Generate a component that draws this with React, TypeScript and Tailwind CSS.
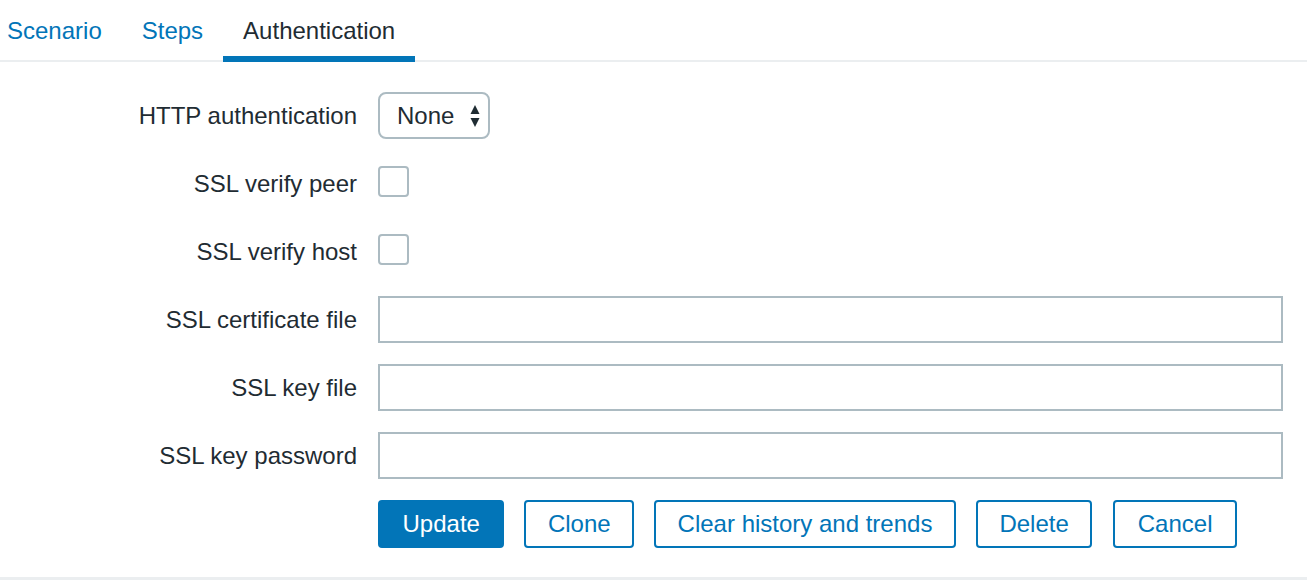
import React from "react";

const tabs = [
  { label: "Scenario", active: false },
  { label: "Steps", active: false },
  { label: "Authentication", active: true },
];

const textFields = ["SSL certificate file", "SSL key file", "SSL key password"];

const buttons = ["Clone", "Clear history and trends", "Delete", "Cancel"];

const SelectArrows = () => (
  <svg width="10" height="22" viewBox="0 0 10 22" className="ml-auto">
    <path d="M5 0 L9.5 9 L0.5 9 Z" fill="#1f2c33" />
    <path d="M0.5 13 L9.5 13 L5 22 Z" fill="#1f2c33" />
  </svg>
);

const Row = ({ label, children }: { label: string; children: React.ReactNode }) => (
  <>
    <div className="flex h-[47px] items-center justify-end pt-[1px] leading-[28px] text-[#1f2c33]">{label}</div>
    <div className="flex h-[47px] items-center">{children}</div>
  </>
);

const Checkbox = () => (
  <div className="-mt-[4px] h-[31px] w-[31px] rounded-[4px] border-2 border-[#acbbc2] bg-white" />
);

export default function App() {
  return (
    <div
      className="flex h-[580px] w-full flex-col overflow-hidden border-b-[3px] border-[#ebeef0] bg-white text-[24px]"
      style={{ fontFamily: '"Liberation Sans", Arial, sans-serif' }}
    >
      {/* tab strip */}
      <ul className="flex border-b-2 border-[#ebeef0]">
        {tabs.map((t, i) => (
          <li
            key={t.label}
            className={`-mb-[2px] h-[62px] border-b-[6px] px-[20px] pt-[17px] leading-[28px] ${
              i === 0 ? "-ml-[13px]" : ""
            } ${t.active ? "border-[#0275b8] text-[#1f2c33]" : "border-transparent text-[#0275b8]"}`}
          >
            {t.label}
          </li>
        ))}
      </ul>

      {/* form */}
      <div className="grid grid-cols-[357px_1fr] gap-x-[21px] gap-y-[21px] pr-[24px] pt-[30px]">
        <Row label="HTTP authentication">
          <div className="flex h-[47px] w-[112px] items-center rounded-[8px] border-2 border-[#acbbc2] pl-[17px] pr-[8px] pt-[1px] leading-[28px] text-[#1f2c33]">
            None
            <SelectArrows />
          </div>
        </Row>
        <Row label="SSL verify peer">
          <Checkbox />
        </Row>
        <Row label="SSL verify host">
          <Checkbox />
        </Row>
        {textFields.map((f) => (
          <Row key={f} label={f}>
            <div className="h-[47px] w-full border-2 border-[#acbbc2] bg-white" />
          </Row>
        ))}
        <div />
        <div className="flex h-[48px] gap-[20px]">
          <button className="h-[48px] rounded-[4px] border-2 border-[#0275b8] bg-[#0275b8] px-[22.5px] leading-[28px] text-white">
            Update
          </button>
          {buttons.map((b) => (
            <button
              key={b}
              className={`h-[48px] rounded-[4px] border-2 border-[#0275b8] bg-white leading-[28px] text-[#0275b8] ${
                b === "Cancel" ? "ml-[1px] px-[22.5px]" : "px-[21.5px]"
              }`}
            >
              {b}
            </button>
          ))}
        </div>
      </div>
    </div>
  );
}
